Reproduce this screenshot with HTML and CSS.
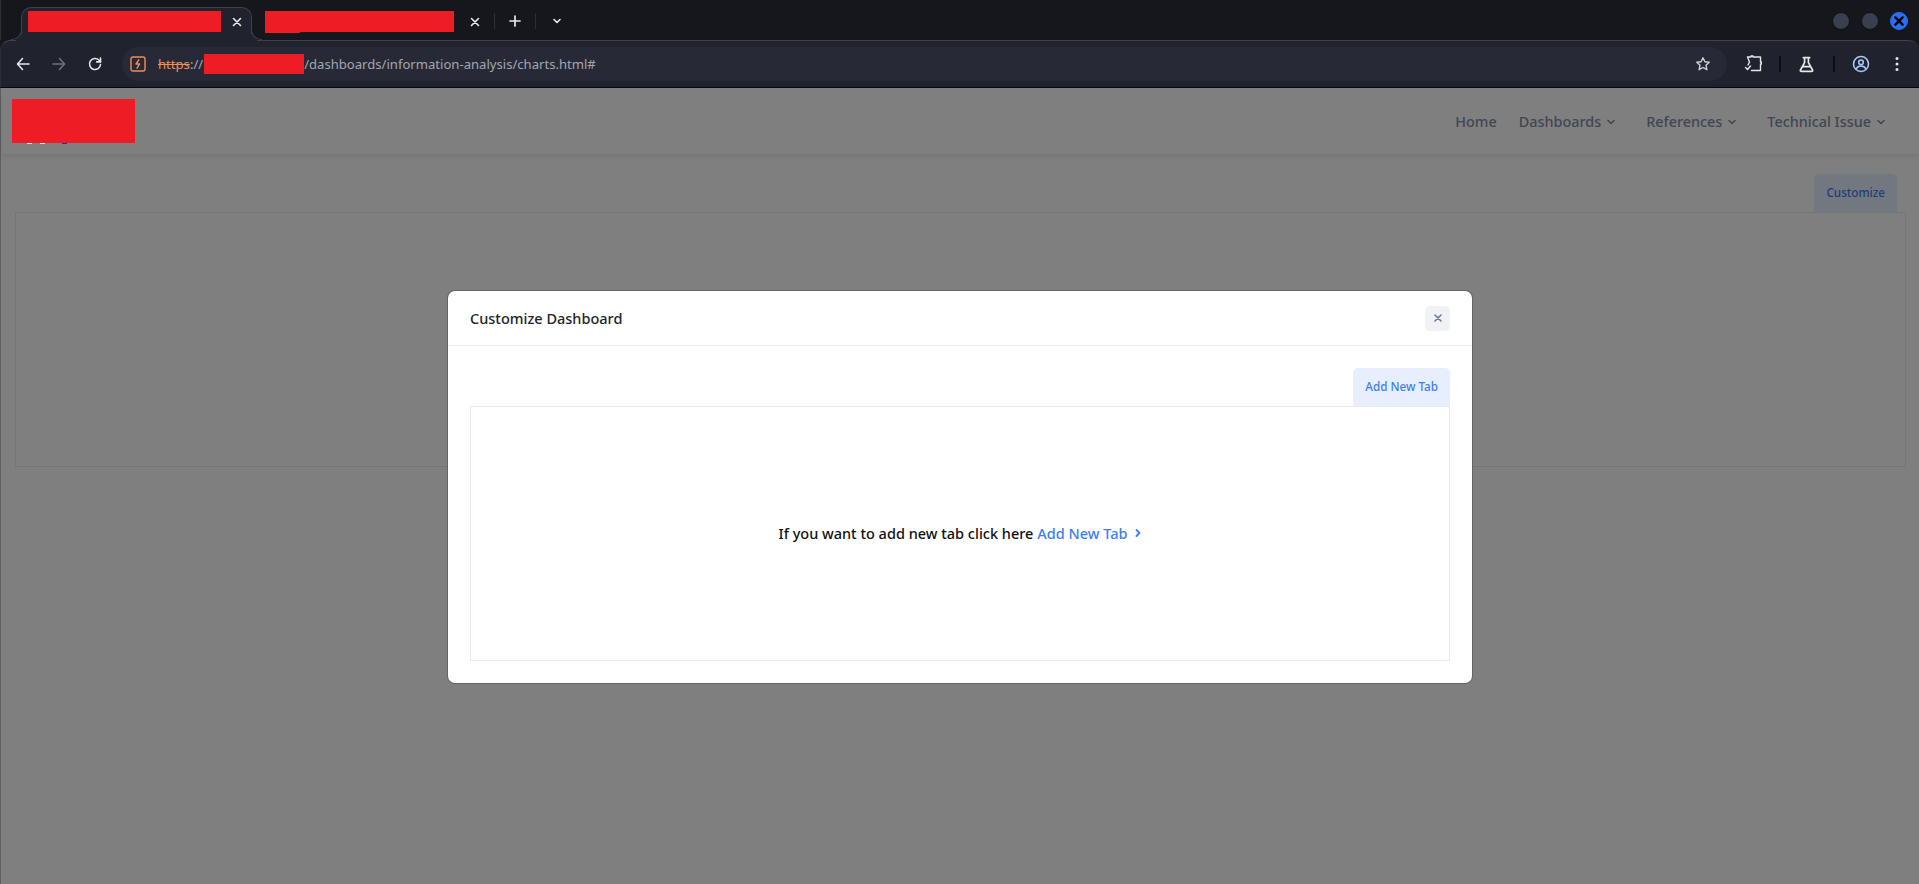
FILE: index.html
```html
<!DOCTYPE html>
<html lang="en">
<head>
<meta charset="utf-8">
<title>Customize Dashboard</title>
<link rel="stylesheet" href="styles.css">
</head>
<body>
<div class="browser">
  <header class="tabstrip">
    <div class="tab tab-active">
      <span class="redact redact-tab1"></span>
      <svg class="tab-x" viewBox="0 0 10 10"><path d="M1.500 1.500l7 7M8.500 1.500l-7 7"/></svg>
    </div>
    <div class="tab tab-idle">
      <span class="redact redact-tab2"></span>
      <svg class="tab-x" viewBox="0 0 10 10"><path d="M1.500 1.500l7 7M8.500 1.500l-7 7"/></svg>
    </div>
    <span class="strip-sep"></span>
    <svg class="strip-plus" viewBox="0 0 12 12"><path d="M6 1v10M1 6h10"/></svg>
    <span class="strip-sep"></span>
    <svg class="strip-chev" viewBox="0 0 10 10"><path d="M2 3.500l3 3 3-3"/></svg>
    <div class="winbtns">
      <span class="winbtn"></span>
      <span class="winbtn"></span>
      <span class="winbtn winbtn-close"><svg viewBox="0 0 10 10"><path d="M2 2l6 6M8 2l-6 6"/></svg></span>
    </div>
  </header>
  <div class="toolbar">
    <svg class="tb tb-back" viewBox="0 0 16 16"><path d="M14 8H3M7.500 2.500L2.500 8l5 5.500"/></svg>
    <svg class="tb tb-fwd" viewBox="0 0 16 16"><path d="M2 8H13M8.500 2.500l5 5.500-5 5.500"/></svg>
    <svg class="tb tb-reload" viewBox="0 0 16 16"><path d="M13.500 8.500a5.500 5.500 0 1 1-1.700-4.500L13.500 5.800"/><path d="M13.500 2v3.900H9.700"/></svg>
    <div class="omnibox">
      <svg class="sec" viewBox="0 0 16 16"><rect x="1" y="1" width="14" height="14" rx="2"/><path d="M8.800 3.800L6 8h3.600L7 12.200"/></svg>
      <span class="url"><s class="url-https">https</s>://<span class="redact redact-url"></span>/dashboards/information-analysis/charts.html#</span>
      <svg class="star" viewBox="0 0 16 16"><path d="M8 1.800l1.900 4 4.300.5-3.200 3 .9 4.400L8 11.500l-3.900 2.200.9-4.400-3.200-3 4.300-.5z"/></svg>
    </div>
    <svg class="tb tb-ext" viewBox="0 0 18 18"><path d="M3.500 2H7V1h2v1h7.500v5h1v2h-1v6.500H7.500M3.500 2l2 5L4 10M1.500 12.500l2 2 3-3.500"/></svg>
    <span class="tb-sep"></span>
    <svg class="tb tb-flask" viewBox="0 0 16 16"><path d="M5 1.500h6M6.200 1.500v4.800L2.300 13.200q-.5 1.300 1 1.300h9.400q1.500 0 1-1.300L9.800 6.300V1.500M4.500 10h7"/></svg>
    <span class="tb-sep"></span>
    <svg class="tb tb-profile" viewBox="0 0 18 18"><circle cx="9" cy="9" r="7.500"/><circle cx="9" cy="7.300" r="2.300"/><path d="M4 14q1.500-3 5-3t5 3"/></svg>
    <svg class="tb-menu" viewBox="0 0 4 16"><circle cx="2" cy="2.500" r="1.500"/><circle cx="2" cy="8" r="1.500"/><circle cx="2" cy="13.500" r="1.500"/></svg>
  </div>
  <div class="viewport">
    <nav class="navbar">
      <span class="redact redact-logo"></span>
      <ul class="menu">
        <li class="menu-home">Home</li>
        <li class="menu-drop menu-dash">Dashboards<svg class="caret" viewBox="0 0 10 10"><path d="M2 3.500l3 3 3-3"/></svg></li>
        <li class="menu-drop menu-ref">References<svg class="caret" viewBox="0 0 10 10"><path d="M2 3.500l3 3 3-3"/></svg></li>
        <li class="menu-drop">Technical Issue<svg class="caret" viewBox="0 0 10 10"><path d="M2 3.500l3 3 3-3"/></svg></li>
      </ul>
    </nav>
    <main class="page">
      <div class="tabrow"><button class="soft-btn">Customize</button></div>
      <div class="panel"></div>
    </main>
    <div class="backdrop">
      <section class="modal">
        <div class="modal-head">
          <h2>Customize Dashboard</h2>
          <button class="close"><svg viewBox="0 0 10 10"><path d="M2 2l6 6M8 2l-6 6"/></svg></button>
        </div>
        <div class="modal-body">
          <div class="tabrow"><button class="soft-btn">Add New Tab</button></div>
          <div class="empty">
            <p>If you want to add new tab click here <a href="#">Add New Tab<svg viewBox="0 0 10 10"><path d="M3.500 2l3 3-3 3"/></svg></a></p>
          </div>
        </div>
      </section>
    </div>
  </div>
</div>
</body>
</html>
```
FILE: styles.css
```css
* { box-sizing: border-box; }
html, body { margin: 0; height: 100%; overflow: hidden; }
body { font-family: "Noto Sans", "Open Sans", sans-serif; background: #16171d; }
svg { fill: none; stroke: currentColor; stroke-linecap: round; stroke-linejoin: round; display: block; flex: none; }
.browser { display: flex; flex-direction: column; height: 884px; width: 1919px; }
.redact { display: block; background: #ee1c25; flex: none; }

.tabstrip { height: 40px; flex: none; display: flex; align-items: flex-start; padding: 7px 0 0 20px; color: #e8e9ee; position: relative; z-index: 2; border-left: 1px solid #2e2f36; }
.tab { height: 34px; display: flex; align-items: flex-start; position: relative; flex: none; }
.tab-active { width: 231px; padding: 3px 0 0 6px; background: #20232e; border: 1px solid #3e414c; border-bottom: 0; border-radius: 10px 10px 0 0; }
.tab-active::before, .tab-active::after { content: ""; position: absolute; bottom: 1px; width: 10px; height: 10px; border-bottom: 1px solid #3e414c; box-shadow: 5px 5px 0 0 #20232e; }
.tab-active::before { left: -11px; border-right: 1px solid #3e414c; border-bottom-right-radius: 10px; }
.tab-active::after { right: -11px; border-left: 1px solid #3e414c; border-bottom-left-radius: 10px; box-shadow: -5px 5px 0 0 #20232e; }
.tab-idle { padding: 4px 0 0 13px; }
.redact-tab1 { width: 193px; height: 21px; }
.redact-tab2 { width: 189px; height: 21px; position: relative; }
.redact-tab2::after { content: ""; position: absolute; left: 0; top: 21px; width: 35px; height: 1px; background: #ee1c25; }
.tab-x { width: 10px; height: 10px; stroke-width: 1.6; margin-top: 6px; }
.tab-active .tab-x { margin-left: 11px; }
.tab-idle .tab-x { margin-left: 16px; }
.strip-sep { width: 1px; height: 16px; margin: 6px 0 0 14px; background: #2c2e37; flex: none; }
.strip-plus { width: 12px; height: 12px; stroke-width: 1.7; margin: 8px 0 0 14px; }
.strip-chev { width: 10px; height: 10px; stroke-width: 1.6; margin: 9px 0 0 16px; }
.winbtns { margin-left: auto; display: flex; gap: 11px; padding: 5px 11px 0 0; }
.winbtn { width: 18px; height: 18px; border-radius: 50%; background: #3a3f4e; border: 1px solid #0e0f13; display: flex; align-items: center; justify-content: center; }
.winbtn-close { background: #2a6ff0; border-color: #2a6ff0; color: #000; }
.winbtn-close svg { width: 12px; height: 12px; stroke-width: 2; }

.toolbar { height: 48px; flex: none; display: flex; align-items: center; background: #20232e; border-top: 1px solid #3e414c; border-left: 1px solid #2e2f36; border-bottom: 1px solid #08090b; padding: 0 0 0 14px; color: #e4e6ea; border-radius: 10px 10px 0 0; }
.tb { width: 16px; height: 16px; stroke-width: 1.6; }
.tb-fwd { color: #6d7079; margin-left: 20px; }
.tb-reload { margin-left: 20px; }
.omnibox { margin-left: 19px; width: 1605px; height: 34px; border-radius: 17px; background: #272a36; display: flex; align-items: center; padding: 0 16px 0 8px; flex: none; }
.sec { width: 16px; height: 16px; color: #ef8d5a; stroke-width: 1.4; margin-right: 12px; }
.url { font-size: 13.1px; color: #a3a6af; display: flex; align-items: center; white-space: pre; }
.url-https { color: #ef8d5a; }
.redact-url { width: 100px; height: 20px; margin-left: 1px; }
.star { width: 16px; height: 16px; margin-left: auto; stroke-width: 1.4; color: #d0d2d8; }
.tb-ext { width: 18px; height: 18px; margin-left: 17px; stroke-width: 1.4; }
.tb-sep { width: 2px; height: 16px; background: #0d0e12; margin: 0 17px; flex: none; }
.tb-flask { width: 17px; height: 17px; }
.tb-flask + .tb-sep { margin-left: 18px; }
.tb-profile { width: 18px; height: 18px; color: #a9c7fa; }
.tb-menu { width: 4px; height: 16px; margin-left: 25px; fill: currentColor; stroke: none; }

.viewport { flex: 1; position: relative; background: #fff; border-left: 1px solid #5f5f5f; }
.navbar { height: 66px; background: #fff; display: flex; align-items: flex-start; justify-content: space-between; box-shadow: 0 2px 6px rgba(0,0,0,.1); padding: 11px 0 0 11px; position: relative; }
.redact-logo { width: 123px; height: 44px; position: relative; z-index: 2; }
.redact-logo::after { content: ""; position: absolute; left: 50px; top: 44px; width: 5px; height: 1px; background: #2a2fa0; box-shadow: -22px 0 0 #dfe3e9, -35px 0 0 #dfe3e9; }
.menu { list-style: none; margin: 0; padding: 13px 33px 0 0; display: flex; font-size: 14.4px; font-weight: 500; color: #7f8ea5; line-height: 20px; }
.menu-home { margin-right: 22px; }
.menu-drop { display: flex; align-items: center; }
.menu-dash, .menu-ref { margin-right: 30px; }
.caret { width: 10px; height: 10px; margin-left: 5px; stroke-width: 1.6; }
.page { padding: 20px 13px 0 14px; }
.tabrow { display: flex; justify-content: flex-end; }
.page .tabrow { padding-right: 9px; }
.soft-btn { border: 0; font: inherit; font-size: 11.7px; font-weight: 500; border-radius: 5px 5px 0 0; background: #e7effe; color: #3d7df5; height: 38px; padding: 0 12px 3px; }
.panel { height: 255px; border: 1px solid #e8e8f2; }
.backdrop { position: absolute; inset: 0; background: rgba(0,0,0,.5); display: flex; justify-content: center; align-items: flex-start; padding-top: 203px; }
.modal { width: 1024px; height: 392px; background: #fff; border-radius: 7px; display: flex; flex-direction: column; box-shadow: 0 0 0 1px rgba(0,0,0,.2); }
.modal-head { height: 55px; flex: none; border-bottom: 1px solid #e9ebf3; display: flex; align-items: center; justify-content: space-between; padding: 0 22px; }
.modal-head h2 { margin: 0; font-size: 14.5px; font-weight: 500; color: #212529; }
.close { width: 25px; height: 25px; border: 0; border-radius: 5px; background: #f0f2f5; color: #6b7c90; display: flex; align-items: center; justify-content: center; padding: 0; }
.close svg { width: 10px; height: 10px; stroke-width: 1.6; }
.modal-body { padding: 22px; flex: 1; display: flex; flex-direction: column; }
.empty { flex: 1; border: 1px solid #e8e8f2; display: flex; align-items: center; justify-content: center; }
.empty p { margin: 0; padding: 0 0 2px 2px; font-size: 14.5px; font-weight: 500; color: #111; display: flex; white-space: pre; align-items: center; }
.empty a { color: #3d7df5; text-decoration: none; display: flex; align-items: center; }
.empty a svg { width: 10px; height: 10px; stroke-width: 1.8; margin-left: 6px; }
```
